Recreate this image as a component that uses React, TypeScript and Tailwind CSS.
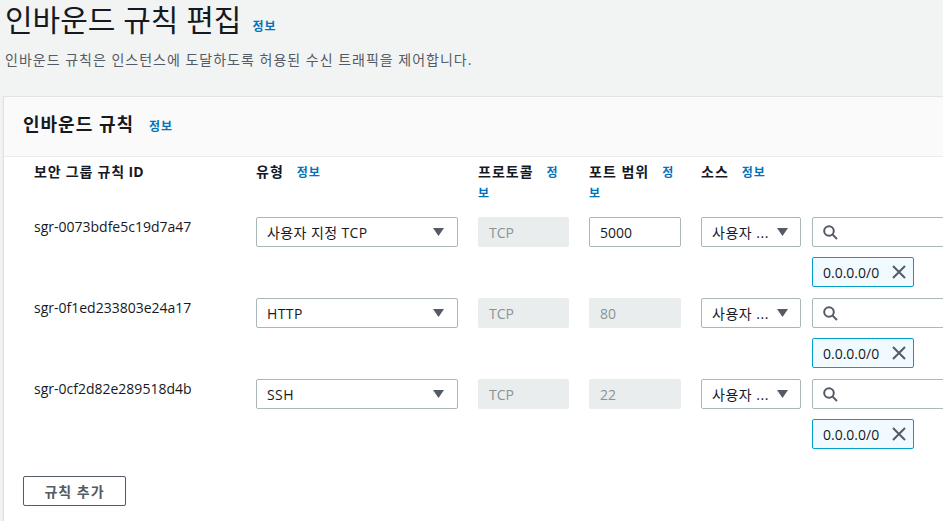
import React from 'react';

type Rule = {
  id: string;
  type: string;
  protocol: string;
  port: string;
  portEditable: boolean;
};

const rules: Rule[] = [
  { id: 'sgr-0073bdfe5c19d7a47', type: '사용자 지정 TCP', protocol: 'TCP', port: '5000', portEditable: true },
  { id: 'sgr-0f1ed233803e24a17', type: 'HTTP', protocol: 'TCP', port: '80', portEditable: false },
  { id: 'sgr-0cf2d82e289518d4b', type: 'SSH', protocol: 'TCP', port: '22', portEditable: false },
];

const Caret: React.FC = () => (
  <svg width="11" height="8" viewBox="0 0 11 8" className="shrink-0">
    <path d="M0 0h11L5.5 8z" fill="#545b64" />
  </svg>
);

const SearchIcon: React.FC = () => (
  <svg width="15" height="15" viewBox="0 0 15 15" fill="none" stroke="#545b64" strokeWidth="2" className="shrink-0">
    <circle cx="6" cy="6" r="4.8" />
    <path d="M9.6 9.6l4.4 4.4" />
  </svg>
);

const CloseIcon: React.FC = () => (
  <svg width="14" height="14" viewBox="0 0 14 14" fill="none" stroke="#545b64" strokeWidth="2" className="shrink-0">
    <path d="M1 1l12 12M13 1L1 13" />
  </svg>
);

const Info: React.FC<{ className?: string }> = ({ className }) => (
  <span className={`text-[12px] font-bold tracking-[1px] text-[#0073bb] ${className ?? ''}`}>정보</span>
);

const cols = 'grid grid-cols-[202px_202px_91px_92px_1fr] gap-x-5';

const App: React.FC = () => {
  return (
    <div
      className="h-[521px] w-full overflow-hidden bg-[#f2f3f3] pl-[3px] text-[#16191f]"
      style={{ fontFamily: '"Open Sans", "Noto Sans CJK KR", sans-serif' }}
    >
      <div className="flex items-baseline pl-[2px]">
        <h1 className="text-[30px] leading-[40px] font-normal">인바운드 규칙 편집</h1>
        <Info className="ml-[11px]" />
      </div>
      <p className="mt-[10px] pl-[2px] text-[14px] leading-[20px] tracking-[1px] text-[#545b64]">
        인바운드 규칙은 인스턴스에 도달하도록 허용된 수신 트래픽을 제어합니다.
      </p>

      <div className="mt-[26px] w-[1100px] border-t border-l border-[#e1e4e4] bg-white shadow-[0_1px_1px_0_rgba(0,28,36,0.15)]">
        <div className="flex items-baseline border-b border-[#eaeded] bg-[#fafafa] pt-[16px] pb-[20px] pl-[19px]">
          <h2 className="text-[18px] leading-[22px] font-bold tracking-[1px]">인바운드 규칙</h2>
          <Info className="ml-[15px]" />
        </div>

        <div className="pt-[5px] pl-[19px] pb-[40px]">
          <div className="pl-[11px]">
            <div className={`${cols} text-[14px] leading-[20px] font-bold`}>
              <div>
                <span className="tracking-[0.8px]">보안 그룹 규칙</span> ID
              </div>
              <div>
                <span className="tracking-[1px]">유형</span>
                <Info className="ml-[13px]" />
              </div>
              <div>
                <span className="tracking-[1px]">프로토콜</span>
                <Info className="ml-[13px]" />
              </div>
              <div>
                <span className="tracking-[1px]">포트 범위</span>
                <Info className="ml-[13px]" />
              </div>
              <div>
                <span className="tracking-[1px]">소스</span>
                <Info className="ml-[13px]" />
              </div>
            </div>

            <div className="mt-[13px] flex flex-col gap-y-[11px]">
              {rules.map((r) => (
                <div key={r.id} className={`${cols} text-[14px]`}>
                  <div className="leading-[20px]">{r.id}</div>
                  <div className="flex h-[30px] items-center justify-between rounded-[2px] border border-[#aab7b8] bg-white pr-[13px] pl-[10px]">
                    <span className="tracking-[0.4px]">{r.type}</span>
                    <Caret />
                  </div>
                  <div className="flex h-[30px] items-center rounded-[2px] bg-[#eaeded] pl-[11px] text-[#879596]">
                    {r.protocol}
                  </div>
                  {r.portEditable ? (
                    <div className="flex h-[30px] items-center rounded-[2px] border border-[#aab7b8] bg-white pl-[10px]">
                      {r.port}
                    </div>
                  ) : (
                    <div className="flex h-[30px] items-center rounded-[2px] bg-[#eaeded] pl-[11px] text-[#879596]">
                      {r.port}
                    </div>
                  )}
                  <div className="flex gap-x-[11px]">
                    <div className="flex h-[30px] w-[100px] items-center justify-between rounded-[2px] border border-[#aab7b8] bg-white pr-[12px] pl-[10px]">
                      <span className="tracking-[0.5px]">사용자 ...</span>
                      <Caret />
                    </div>
                    <div className="flex w-[240px] flex-col">
                      <div className="flex h-[30px] items-center rounded-[2px] border border-[#aab7b8] bg-white pl-[10px]">
                        <SearchIcon />
                      </div>
                      <div className="mt-[10px] flex h-[30px] w-[102px] items-center justify-between rounded-[2px] border border-[#00a1c9] bg-[#f1faff] pr-[7px] pl-[10px]">
                        <span>0.0.0.0/0</span>
                        <CloseIcon />
                      </div>
                    </div>
                  </div>
                </div>
              ))}
            </div>
          </div>

          <button className="mt-[27px] h-[30px] w-[103px] rounded-[2px] border border-[#545b64] bg-white text-[14px] font-bold tracking-[1px] text-[#545b64]">
            규칙 추가
          </button>
        </div>
      </div>
    </div>
  );
};

export default App;
